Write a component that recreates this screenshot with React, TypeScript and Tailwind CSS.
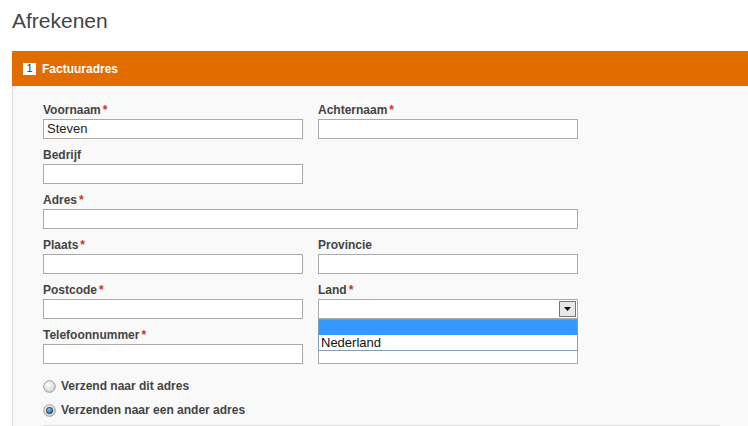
import React from "react";

const LABEL = "text-[12px] leading-[16px] font-bold text-[#444] mb-[1px]";
const INPUT = "h-[20px] w-full border border-[#aaa] bg-white px-[3px] text-[13px] leading-[18px] text-[#222]";

function Field({ label, required, value, wide }: { label: string; required?: boolean; value?: string; wide?: boolean }) {
  return (
    <div className={wide ? "col-span-2 w-[535px]" : ""}>
      <div className={`${LABEL} h-[16px]`}>
        {label}
        {required && <span className="ml-[2px] text-[#c8361b]">*</span>}
      </div>
      <div className={INPUT}>{value}</div>
    </div>
  );
}

function Radio({ checked }: { checked?: boolean }) {
  return (
    <svg width="13" height="13" viewBox="0 0 13 13" className="shrink-0">
      <defs>
        <radialGradient id={checked ? "rc" : "ru"} cx="0.4" cy="0.35" r="0.7">
          <stop offset="0" stopColor="#ffffff" />
          <stop offset="1" stopColor="#cfcfcf" />
        </radialGradient>
        <radialGradient id="dot" cx="0.4" cy="0.35" r="0.7">
          <stop offset="0" stopColor="#7fc2f0" />
          <stop offset="1" stopColor="#1b5f96" />
        </radialGradient>
      </defs>
      <circle cx="6.5" cy="6.5" r="5.8" fill={checked ? "url(#rc)" : "url(#ru)"} stroke="#9a9a9a" strokeWidth="1" />
      {checked && <circle cx="6.5" cy="6.5" r="3.2" fill="url(#dot)" stroke="#26384a" strokeWidth="0.8" />}
    </svg>
  );
}

export default function App() {
  return (
    <div className="w-[748px] h-[426px] overflow-hidden bg-white font-['Liberation_Sans',Arial,sans-serif]">
      <h1 className="pl-[12px] pt-[8px] text-[21px] leading-[25px] text-[#444]">Afrekenen</h1>

      <div className="ml-[12px] mt-[18px]">
        {/* Header */}
        <div className="flex h-[35px] items-center bg-[#e36c00] pl-[11px]">
          <span className="flex h-[12px] w-[13px] items-center justify-center bg-white text-[11px] leading-none text-[#333]">1</span>
          <span className="ml-[6px] text-[12px] font-bold text-white">Factuuradres</span>
        </div>

        {/* Body */}
        <div className="border-l border-[#ddd] bg-[#f9f9f9] pl-[30px] pt-[16px]">
          <div className="grid w-[535px] grid-cols-[260px_260px] gap-x-[15px] gap-y-[8px]">
            <Field label="Voornaam" required value="Steven" />
            <Field label="Achternaam" required />
            <Field label="Bedrijf" />
            <div />
            <Field label="Adres" required wide />
            <Field label="Plaats" required />
            <Field label="Provincie" />
            <Field label="Postcode" required />

            {/* Land select with open list */}
            <div className="relative">
              <div className={LABEL}>
                Land<span className="ml-[2px] text-[#c8361b]">*</span>
              </div>
              <div className="flex h-[20px] items-center justify-end border border-[#aaa] bg-white pr-[1px]">
                <div className="flex h-[16px] w-[17px] items-center justify-center border border-[#777] bg-[#e8e8e8]">
                  <svg width="7" height="4" viewBox="0 0 7 4">
                    <path d="M0 0h7L3.5 4z" fill="#111" />
                  </svg>
                </div>
              </div>
              <div className="absolute left-0 top-[37px] z-10 w-[260px] border border-[#7f9db9] bg-white">
                <div className="h-[15px] bg-[#3399ff]" />
                <div className="h-[15px] pl-[2px] text-[13px] leading-[15px] text-[#111]">Nederland</div>
              </div>
            </div>

            <Field label="Telefoonnummer" required />
            {/* field hidden behind the open list */}
            <Field label="" />
          </div>

          <div className="mt-[16px] flex flex-col gap-[11px]">
            <label className="flex items-center gap-[5px] text-[12px] font-bold leading-[13px] text-[#444]">
              <Radio />
              Verzend naar dit adres
            </label>
            <label className="flex items-center gap-[5px] text-[12px] font-bold leading-[13px] text-[#444]">
              <Radio checked />
              Verzenden naar een ander adres
            </label>
          </div>

          <div className="mt-[8px] h-[20px] w-[677px] border-t border-[#ddd]" />
        </div>
      </div>
    </div>
  );
}
